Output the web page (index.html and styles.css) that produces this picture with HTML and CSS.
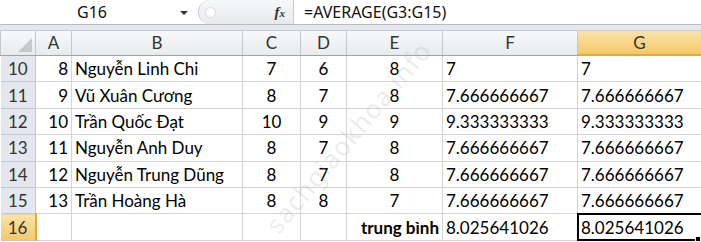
FILE: index.html
```html
<!DOCTYPE html>
<html lang="vi">
  <head>
    <meta charset="UTF-8" />
    <title>Bảng điểm</title>
    <link rel="stylesheet" href="styles.css">
  </head>
  <body>
    <div class="formula-bar">
      <div class="name-box">G16</div>
      <div class="name-arrow">
        <svg width="10" height="6" viewBox="0 0 10 6"><path d="M1 1 L9 1 L5 5 Z" fill="#333"/></svg>
      </div>
      <div class="fx-group">
        <span class="knob"></span>
        <span class="fx">f<small>x</small></span>
      </div>
      <div class="formula">=AVERAGE(G3:G15)</div>
    </div>
    <div class="spacer"></div>

    <div class="sheet">
      <table class="grid">
        <colgroup>
          <col class="c-hdr">
          <col class="c-a">
          <col class="c-b">
          <col class="c-c">
          <col class="c-d">
          <col class="c-e">
          <col class="c-f">
          <col class="c-g">
        </colgroup>
        <tr class="col-heads">
          <th class="corner"><span class="tri"></span></th>
          <th>A</th>
          <th>B</th>
          <th>C</th>
          <th>D</th>
          <th>E</th>
          <th>F</th>
          <th class="sel">G</th>
        </tr>
        <tr>
          <th class="rh">10</th>
          <td class="r">8</td><td>Nguyễn Linh Chi</td><td class="m">7</td><td class="m">6</td><td class="m">8</td><td>7</td><td>7</td>
        </tr>
        <tr>
          <th class="rh">11</th>
          <td class="r">9</td><td>Vũ Xuân Cương</td><td class="m">8</td><td class="m">7</td><td class="m">8</td><td>7.666666667</td><td>7.666666667</td>
        </tr>
        <tr>
          <th class="rh">12</th>
          <td class="r">10</td><td>Trần Quốc Đạt</td><td class="m">10</td><td class="m">9</td><td class="m">9</td><td>9.333333333</td><td>9.333333333</td>
        </tr>
        <tr>
          <th class="rh">13</th>
          <td class="r">11</td><td>Nguyễn Anh Duy</td><td class="m">8</td><td class="m">7</td><td class="m">8</td><td>7.666666667</td><td>7.666666667</td>
        </tr>
        <tr>
          <th class="rh">14</th>
          <td class="r">12</td><td>Nguyễn Trung Dũng</td><td class="m">8</td><td class="m">7</td><td class="m">8</td><td>7.666666667</td><td>7.666666667</td>
        </tr>
        <tr>
          <th class="rh">15</th>
          <td class="r">13</td><td>Trần Hoàng Hà</td><td class="m">8</td><td class="m">8</td><td class="m">7</td><td>7.666666667</td><td>7.666666667</td>
        </tr>
        <tr>
          <th class="rh sel">16</th>
          <td></td><td></td><td></td><td></td><td class="r bold">trung bình</td><td>8.025641026</td><td class="active">8.025641026<span class="handle"></span></td>
        </tr>
      </table>
      <div class="watermark">sachgiaokhoa.info</div>
    </div>
  </body>
</html>
```
FILE: styles.css
```css
body {
  margin: 0;
  background: #fff;
  font-family: Lato, "Noto Sans", sans-serif;
  overflow: hidden;
}

.formula-bar {
  display: flex;
  align-items: center;
  height: 24px;
  border-bottom: 1px solid #b8bcc2;
  background: #fff;
  font-family: "Noto Sans", sans-serif;
  font-size: 16px;
  color: #111;
}

.name-box {
  width: 168px;
  text-align: center;
  padding-left: 8px;
}

.name-arrow {
  width: 16px;
  display: flex;
  justify-content: center;
  padding-top: 2px;
}

.fx-group {
  display: flex;
  align-items: center;
  justify-content: space-between;
  width: 96px;
  height: 24px;
  margin-left: 6px;
  padding: 0 8px 0 6px;
  box-sizing: border-box;
  border-left: 1px solid #c8ccd2;
  border-right: 1px solid #c8ccd2;
  border-radius: 14px 0 0 14px;
  background: linear-gradient(to bottom, #f6f7f9, #e7e9ec);
}

.knob {
  width: 9px;
  height: 9px;
  border-radius: 50%;
  background: #fff;
  border: 1px solid #d6d9dd;
}

.fx {
  font-family: "Liberation Serif", serif;
  font-style: italic;
  font-weight: bold;
  font-size: 15px;
  color: #333;
}

.fx small {
  font-size: 11px;
}

.formula {
  padding-left: 10px;
}

.spacer {
  height: 5px;
  background: #e4e7eb;
  border-bottom: 1px solid #c9ccd0;
}

.sheet {
  position: relative;
}

.grid {
  border-collapse: collapse;
  table-layout: fixed;
  width: 701px;
  font-size: 17px;
  color: #000;
}

.c-hdr { width: 35px; }
.c-a { width: 36px; }
.c-b { width: 171px; }
.c-c { width: 58px; }
.c-d { width: 46px; }
.c-e { width: 96px; }
.c-f { width: 135px; }
.c-g { width: 124px; }

.grid th,
.grid td {
  border: 1px solid #d4d4d4;
  padding: 0 3px;
  height: 25.4px;
  white-space: nowrap;
  overflow: visible;
  text-align: left;
  font-weight: normal;
}

.col-heads th {
  height: 23px;
  text-align: center;
  color: #333;
  background: linear-gradient(to bottom, #f7f8f9, #e8eaec);
  border-color: #c4c7cc;
  border-bottom-color: #9ea3aa;
  border-top: none;
}

.col-heads th.sel {
  background: linear-gradient(to bottom, #fbe3a8, #f4c868);
  border-bottom: 2px solid #e2a841;
}

.corner {
  position: relative;
}

.tri {
  position: absolute;
  right: 3px;
  bottom: 3px;
  width: 0;
  height: 0;
  border-left: 14px solid transparent;
  border-bottom: 14px solid #c5c9ce;
}

.grid th.rh {
  text-align: center;
  color: #333;
  background: #e4e8ee;
  border-color: #c4c9d0;
  border-left: none;
}

.grid th.rh.sel {
  background: linear-gradient(to bottom, #fbe3a8, #f4c868);
  border-right: 2px solid #e2a841;
}

.grid td.r { text-align: right; }
.grid td.m { text-align: center; }
.grid td.bold { font-weight: bold; }

.grid td.active {
  position: relative;
  outline: 2px solid #000;
  outline-offset: -1px;
}

.handle {
  position: absolute;
  right: 0;
  bottom: -3px;
  width: 4px;
  height: 5px;
  background: #000;
  border: 1px solid #fff;
}

.watermark {
  position: absolute;
  left: 228px;
  top: 88px;
  transform: rotate(-50deg);
  font-size: 26px;
  font-family: "Noto Sans", sans-serif;
  color: rgba(170, 170, 170, 0.22);
  pointer-events: none;
  letter-spacing: 1px;
}
```
